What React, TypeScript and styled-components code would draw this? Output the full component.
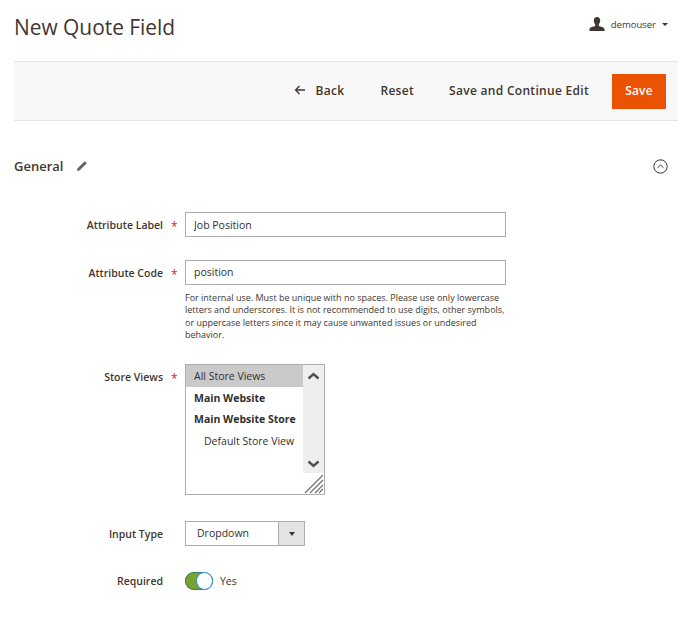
import React from 'react'
import styled, { createGlobalStyle } from 'styled-components'

const Global = createGlobalStyle`
    html, body { margin: 0; padding: 0; background: #fff; }
    body { font-family: "Open Sans", sans-serif; color: #303030; }
`

const Page = styled.div`
    width: 683px;
    height: 624px;
    overflow: hidden;
    padding: 0 5px 0 14px;
    box-sizing: border-box;
`
const Header = styled.header`
    display: flex;
    justify-content: space-between;
    height: 61px;
`
const Title = styled.h1`
    margin: 12px 0 0;
    font-size: 20.9px;
    line-height: 30px;
    font-weight: 400;
    color: #41362f;
`
const User = styled.div`
    display: flex;
    align-items: center;
    height: 16px;
    margin: 16px 10px 0 0;
    font-size: 9.5px;
    color: #41362f;
`
const UserName = styled.span`
    margin-left: 6px;
`
const Caret = styled.span`
    width: 0;
    height: 0;
    margin-left: 6px;
    border-left: 3px solid transparent;
    border-right: 3px solid transparent;
    border-top: 3px solid #41362f;
`
const Toolbar = styled.div`
    display: flex;
    justify-content: flex-end;
    align-items: center;
    height: 60px;
    box-sizing: border-box;
    padding-right: 12px;
    background: #f8f8f8;
    border-top: 1px solid #e3e3e3;
    border-bottom: 1px solid #e3e3e3;
`
const Action = styled.button<{ $gap: number }>`
    display: flex;
    align-items: center;
    padding: 0 0 2px;
    margin-right: ${p => p.$gap}px;
    border: 0;
    background: none;
    font: 600 12px "Open Sans", sans-serif;
    letter-spacing: 0.3px;
    color: #41362f;
`
const BackIcon = styled.svg`
    width: 12px;
    height: 10px;
    margin-right: 10px;
`
const SaveButton = styled.button`
    width: 54px;
    height: 35px;
    padding: 0 0 2px;
    border: 0;
    background: #eb5202;
    color: #fff;
    font: 600 12px "Open Sans", sans-serif;
    letter-spacing: 0.2px;
`
const SectionHead = styled.div`
    display: flex;
    align-items: center;
    height: 20px;
    margin-top: 35px;
    padding-right: 10px;
`
const SectionTitle = styled.h2`
    margin: 0 13px 0 0;
    font-size: 13px;
    line-height: 20px;
    font-weight: 600;
    color: #41362f;
`
const Collapse = styled.svg`
    width: 15px;
    height: 15px;
    margin-left: auto;
`
const Form = styled.div`
    display: flex;
    flex-direction: column;
    margin-top: 36px;
`
const Row = styled.div<{ $gap: number }>`
    display: grid;
    grid-template-columns: 149px 22px 1fr;
    margin-bottom: ${p => p.$gap}px;
`
const Label = styled.label`
    justify-content: flex-end;
    display: flex;
    align-items: center;
    height: 25px;
    font-size: 10.5px;
    font-weight: 600;
    color: #41362f;
`
const Star = styled.span`
    height: 25px;
    line-height: 29px;
    padding-left: 8px;
    font-size: 12px;
    color: #eb2020;
`
const Input = styled.input<{ $raised?: boolean }>`
    display: block;
    width: 321px;
    height: 25px;
    box-sizing: border-box;
    padding: 0 8px ${p => (p.$raised ? 2 : 0)}px;
    border: 1px solid #adadad;
    outline: none;
    font: 400 10.5px "Open Sans", sans-serif;
    color: #303030;
`
const Note = styled.p`
    width: 321px;
    margin: 7px 0 0;
    font-size: 9px;
    line-height: 12.3px;
    color: #41362f;
`
const MultiSelect = styled.div`
    display: flex;
    position: relative;
    width: 140px;
    height: 131px;
    box-sizing: border-box;
    border: 1px solid #adadad;
`
const Options = styled.div`
    flex: 1;
    height: 107px;
    font-size: 10.5px;
`
const Option = styled.div<{ $selected?: boolean; $bold?: boolean; $indent?: boolean }>`
    height: 21.5px;
    line-height: 22px;
    padding-left: ${p => (p.$indent ? 18 : 8)}px;
    white-space: nowrap;
    background: ${p => (p.$selected ? '#cacaca' : 'transparent')};
    font-weight: ${p => (p.$bold ? 700 : 400)};
    color: #303030;
`
const Scrollbar = styled.div`
    display: flex;
    flex-direction: column;
    justify-content: space-between;
    align-items: center;
    width: 21px;
    height: 108px;
    box-sizing: border-box;
    padding: 7px 0 5px;
    background: #eeeeee;
`
const Grip = styled.svg`
    position: absolute;
    right: 0;
    bottom: 0;
    width: 20px;
    height: 20px;
`
const Dropdown = styled.div`
    display: flex;
    width: 120px;
    height: 25px;
    box-sizing: border-box;
    border: 1px solid #adadad;
    font-size: 10.5px;
    color: #303030;
`
const DropdownValue = styled.span`
    flex: 1;
    padding-left: 11px;
    line-height: 22px;
`
const DropdownArrow = styled.span`
    display: flex;
    align-items: center;
    justify-content: center;
    width: 25px;
    background: #e3e3e3;
    border-left: 1px solid #adadad;
    &::after {
        content: '';
        border-left: 3px solid transparent;
        border-right: 3px solid transparent;
        border-top: 4px solid #41362f;
    }
`
const ToggleRow = styled.div`
    display: flex;
    align-items: center;
    height: 18px;
    margin-top: 4px;
`
const Toggle = styled.span`
    display: flex;
    justify-content: flex-end;
    width: 28px;
    height: 18px;
    box-sizing: border-box;
    border-radius: 9px;
    background: #79a22e;
    box-shadow: inset 0 0 0 1px #3f7a6e;
`
const Knob = styled.span`
    width: 17px;
    height: 18px;
    box-sizing: border-box;
    border: 1.5px solid #2b8fe0;
    border-radius: 50%;
    background: #fff;
`
const ToggleText = styled.span`
    margin-left: 7px;
    font-size: 10.5px;
    color: #41362f;
`

const Chevron = ({ up }: { up?: boolean }) => (
    <svg width="13" height="8" viewBox="0 0 13 8">
        <path d={up ? 'M1.5 6.5 6.5 2l5 4.5' : 'M1.5 1.5 6.5 6l5-4.5'} fill="none" stroke="#505050" strokeWidth="2.4" />
    </svg>
)

export default function App() {
    return (
        <Page>
            <Global />
            <Header>
                <Title>New Quote Field</Title>
                <User>
                    <svg width="16" height="14" viewBox="0 0 16 14">
                        <path d="M8 0c2 0 3.200 1.500 3.200 3.600 0 1.600-.7 3-1.400 3.800v1.500c1.800.7 5.400 1.200 5.700 3V14H.5v-2.100c.3-1.800 3.900-2.300 5.700-3V7.400C5.500 6.600 4.800 5.200 4.800 3.600 4.800 1.500 6 0 8 0z" fill="#41362f" />
                    </svg>
                    <UserName>demouser</UserName>
                    <Caret />
                </User>
            </Header>
            <Toolbar>
                <Action $gap={36}>
                    <BackIcon viewBox="0 0 12 10">
                        <path d="M11 5H1.500M5.500 1 1.500 5l4 4" fill="none" stroke="#41362f" strokeWidth="1.300" />
                    </BackIcon>
                    Back
                </Action>
                <Action $gap={35}>Reset</Action>
                <Action $gap={23}>Save and Continue Edit</Action>
                <SaveButton>Save</SaveButton>
            </Toolbar>
            <SectionHead>
                <SectionTitle>General</SectionTitle>
                <svg width="12" height="12" viewBox="0 0 12 12">
                    <path d="M1 11l.6-2.700L8.800 1.200l2 2L3.600 10.400z" fill="#5f6468" />
                </svg>
                <Collapse viewBox="0 0 15 15">
                    <circle cx="7.500" cy="7.500" r="6.700" fill="none" stroke="#41362f" strokeWidth="1" />
                    <path d="M4.500 8.800 7.500 6l3 2.800" fill="none" stroke="#41362f" strokeWidth="1" />
                </Collapse>
            </SectionHead>
            <Form>
                <Row $gap={23}>
                    <Label>Attribute Label</Label>
                    <Star>*</Star>
                    <Input readOnly value="Job Position" />
                </Row>
                <Row $gap={23}>
                    <Label>Attribute Code</Label>
                    <Star>*</Star>
                    <div>
                        <Input $raised readOnly value="position" />
                        <Note>
                            For internal use. Must be unique with no spaces. Please use only lowercase letters and underscores. It is not recommended to use digits, other symbols, or uppercase letters since it may cause unwanted issues or undesired behavior.
                        </Note>
                    </div>
                </Row>
                <Row $gap={26}>
                    <Label>Store Views</Label>
                    <Star>*</Star>
                    <MultiSelect>
                        <Options>
                            <Option $selected>All Store Views</Option>
                            <Option $bold>Main Website</Option>
                            <Option $bold>Main Website Store</Option>
                            <Option $indent>Default Store View</Option>
                        </Options>
                        <Scrollbar>
                            <Chevron up />
                            <Chevron />
                        </Scrollbar>
                        <Grip viewBox="0 0 20 20">
                            <path d="M1 19 19 1M6 19 19 6M11 19l8-8M15 19l4-4" stroke="#707070" strokeWidth="1.200" />
                        </Grip>
                    </MultiSelect>
                </Row>
                <Row $gap={22}>
                    <Label>Input Type</Label>
                    <span />
                    <Dropdown>
                        <DropdownValue>Dropdown</DropdownValue>
                        <DropdownArrow />
                    </Dropdown>
                </Row>
                <Row $gap={0}>
                    <Label>Required</Label>
                    <span />
                    <ToggleRow>
                        <Toggle><Knob /></Toggle>
                        <ToggleText>Yes</ToggleText>
                    </ToggleRow>
                </Row>
            </Form>
        </Page>
    )
}
